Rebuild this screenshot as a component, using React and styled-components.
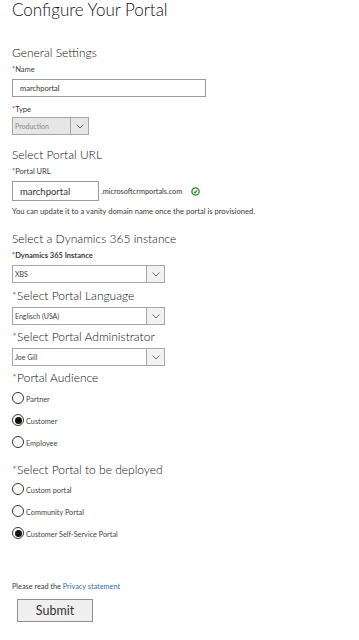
import React from 'react';
import styled, { createGlobalStyle } from 'styled-components';

const GlobalStyle = createGlobalStyle`
  body {
    margin: 0;
    background: #ffffff;
    font-family: Lato, "Open Sans", Arial, sans-serif;
    color: #333333;
  }
`;

const Page = styled.div`
  display: flex;
  flex-direction: column;
  align-items: flex-start;
  padding: 0 12px;
  width: 359px;
  box-sizing: border-box;
`;

const Title = styled.h1`
  margin: 0;
  font-size: 17px;
  font-weight: 300;
  line-height: 20px;
  color: #111111;
`;

const Heading = styled.h2`
  margin: ${p => p.$top || 0}px 0 0;
  font-size: 12px;
  font-weight: 300;
  line-height: 16px;
  color: #111111;

  .req {
    color: #d13438;
  }
`;

const Label = styled.div`
  margin-top: ${p => p.$top || 4}px;
  font-size: 7.5px;
  line-height: 10px;
  font-weight: ${p => (p.$bold ? 700 : 400)};
  color: #3a3a3a;

  .req {
    color: #d13438;
  }
`;

const TextInput = styled.div`
  margin-top: ${p => (p.$top === undefined ? 4 : p.$top)}px;
  width: ${p => p.$width}px;
  height: ${p => p.$height || 18}px;
  box-sizing: border-box;
  border: 1px solid #9a9a9a;
  display: flex;
  align-items: center;
  padding-left: ${p => p.$pad || 7}px;
  font-size: ${p => p.$size || 7.5}px;
  color: #333333;
`;

const Select = styled.div`
  margin-top: ${p => p.$top}px;
  width: ${p => p.$width}px;
  height: 18px;
  box-sizing: border-box;
  border: 1px solid #a6a6a6;
  display: flex;
  align-items: stretch;
  background: ${p => (p.$disabled ? '#e6e6e6' : '#ffffff')};
  font-size: 7px;
  color: ${p => (p.$disabled ? '#8a8a8a' : '#444444')};

  .value {
    flex: 1;
    display: flex;
    align-items: center;
    padding-left: 2px;
  }

  .arrow {
    width: 17px;
    border-left: 1px solid #a6a6a6;
    background: ${p => (p.$disabled ? '#e6e6e6' : '#f2f2f2')};
    display: flex;
    align-items: center;
    justify-content: center;
  }
`;

const UrlRow = styled.div`
  margin-top: 4px;
  display: flex;
  align-items: center;
  gap: 2px;
  font-size: 7.3px;
  color: #333333;

  svg {
    margin-left: 7px;
  }
`;

const Note = styled.div`
  margin-top: 5px;
  font-size: 7.6px;
  line-height: 10px;
  color: #3a3a3a;
`;

const RadioGroup = styled.div`
  display: flex;
  flex-direction: column;
  gap: 10px;
  margin-top: ${p => p.$top}px;
`;

const RadioRow = styled.div`
  display: flex;
  align-items: flex-end;
  height: 12px;
  font-size: 7.3px;
  line-height: 9px;
  color: #444444;
  gap: 2px;
`;

const Circle = styled.span`
  width: 12px;
  height: 12px;
  box-sizing: border-box;
  border-radius: 50%;
  border: 1px solid #333333;
  display: flex;
  align-items: center;
  justify-content: center;
  flex-shrink: 0;

  &::after {
    content: '';
    width: 7px;
    height: 7px;
    border-radius: 50%;
    background: #111111;
    display: ${p => (p.$checked ? 'block' : 'none')};
  }
`;

const Privacy = styled.div`
  margin-top: 43px;
  font-size: 7.3px;
  line-height: 10px;
  color: #3a3a3a;

  a {
    color: #2b6bc4;
    text-decoration: none;
  }
`;

const SubmitButton = styled.button`
  margin: 7px 0 0 5px;
  width: 76px;
  height: 23px;
  box-sizing: border-box;
  border: 1px solid #8f8f8f;
  background: #efefef;
  font-family: inherit;
  font-size: 12.5px;
  font-weight: 400;
  color: #333333;
  padding: 0;
`;

const Chevron = () => (
  <svg width="8" height="5" viewBox="0 0 8 5">
    <path d="M0.5 0.5 L4 4 L7.5 0.5" fill="none" stroke="#666" strokeWidth="1" />
  </svg>
);

const Check = () => (
  <svg width="9" height="9" viewBox="0 0 9 9">
    <circle cx="4.5" cy="4.5" r="3.6" fill="none" stroke="#2a8a2a" strokeWidth="1.3" />
    <path d="M2.8 4.6 L4 5.8 L6.2 3.3" fill="none" stroke="#2a8a2a" strokeWidth="1.2" />
  </svg>
);

const Dropdown = ({ value, width, disabled, top }) => (
  <Select $width={width} $disabled={disabled} $top={top}>
    <span className="value">{value}</span>
    <span className="arrow"><Chevron /></span>
  </Select>
);

const Radio = ({ label, checked }) => (
  <RadioRow>
    <Circle $checked={checked} />
    <span>{label}</span>
  </RadioRow>
);

const Req = () => <span className="req">*</span>;

const App = () => (
  <>
    <GlobalStyle />
    <Page>
      <Title>Configure Your Portal</Title>

      <Heading $top={25}>General Settings</Heading>
      <Label><Req />Name</Label>
      <TextInput $width={194}>marchportal</TextInput>
      <Label $top={8}><Req />Type</Label>
      <Dropdown value="Production" width={77} disabled top={2} />

      <Heading $top={12}>Select Portal URL</Heading>
      <Label><Req />Portal URL</Label>
      <UrlRow>
        <TextInput $width={87} $height={20} $top={0} $size={9.5}>marchportal</TextInput>
        <span>.microsoftcrmportals.com</span>
        <Check />
      </UrlRow>
      <Note>You can update it to a vanity domain name once the portal is provisioned.</Note>

      <Heading $top={15}>Select a Dynamics 365 instance</Heading>
      <Label $bold><Req />Dynamics 365 Instance</Label>
      <Dropdown value="XBS" width={153} top={4} />

      <Heading $top={5}><Req />Select Portal Language</Heading>
      <Dropdown value="Englisch (USA)" width={153} top={3} />

      <Heading $top={4}><Req />Select Portal Administrator</Heading>
      <Dropdown value="Joe Gill" width={153} top={3} />

      <Heading $top={4}><Req />Portal Audience</Heading>
      <RadioGroup $top={6}>
        <Radio label="Partner" />
        <Radio label="Customer" checked />
        <Radio label="Employee" />
      </RadioGroup>

      <Heading $top={14}><Req />Select Portal to be deployed</Heading>
      <RadioGroup $top={5}>
        <Radio label="Custom portal" />
        <Radio label="Community Portal" />
        <Radio label="Customer Self-Service Portal" checked />
      </RadioGroup>

      <Privacy>Please read the <a href="#privacy">Privacy statement</a></Privacy>
      <SubmitButton>Submit</SubmitButton>
    </Page>
  </>
);

export default App;
